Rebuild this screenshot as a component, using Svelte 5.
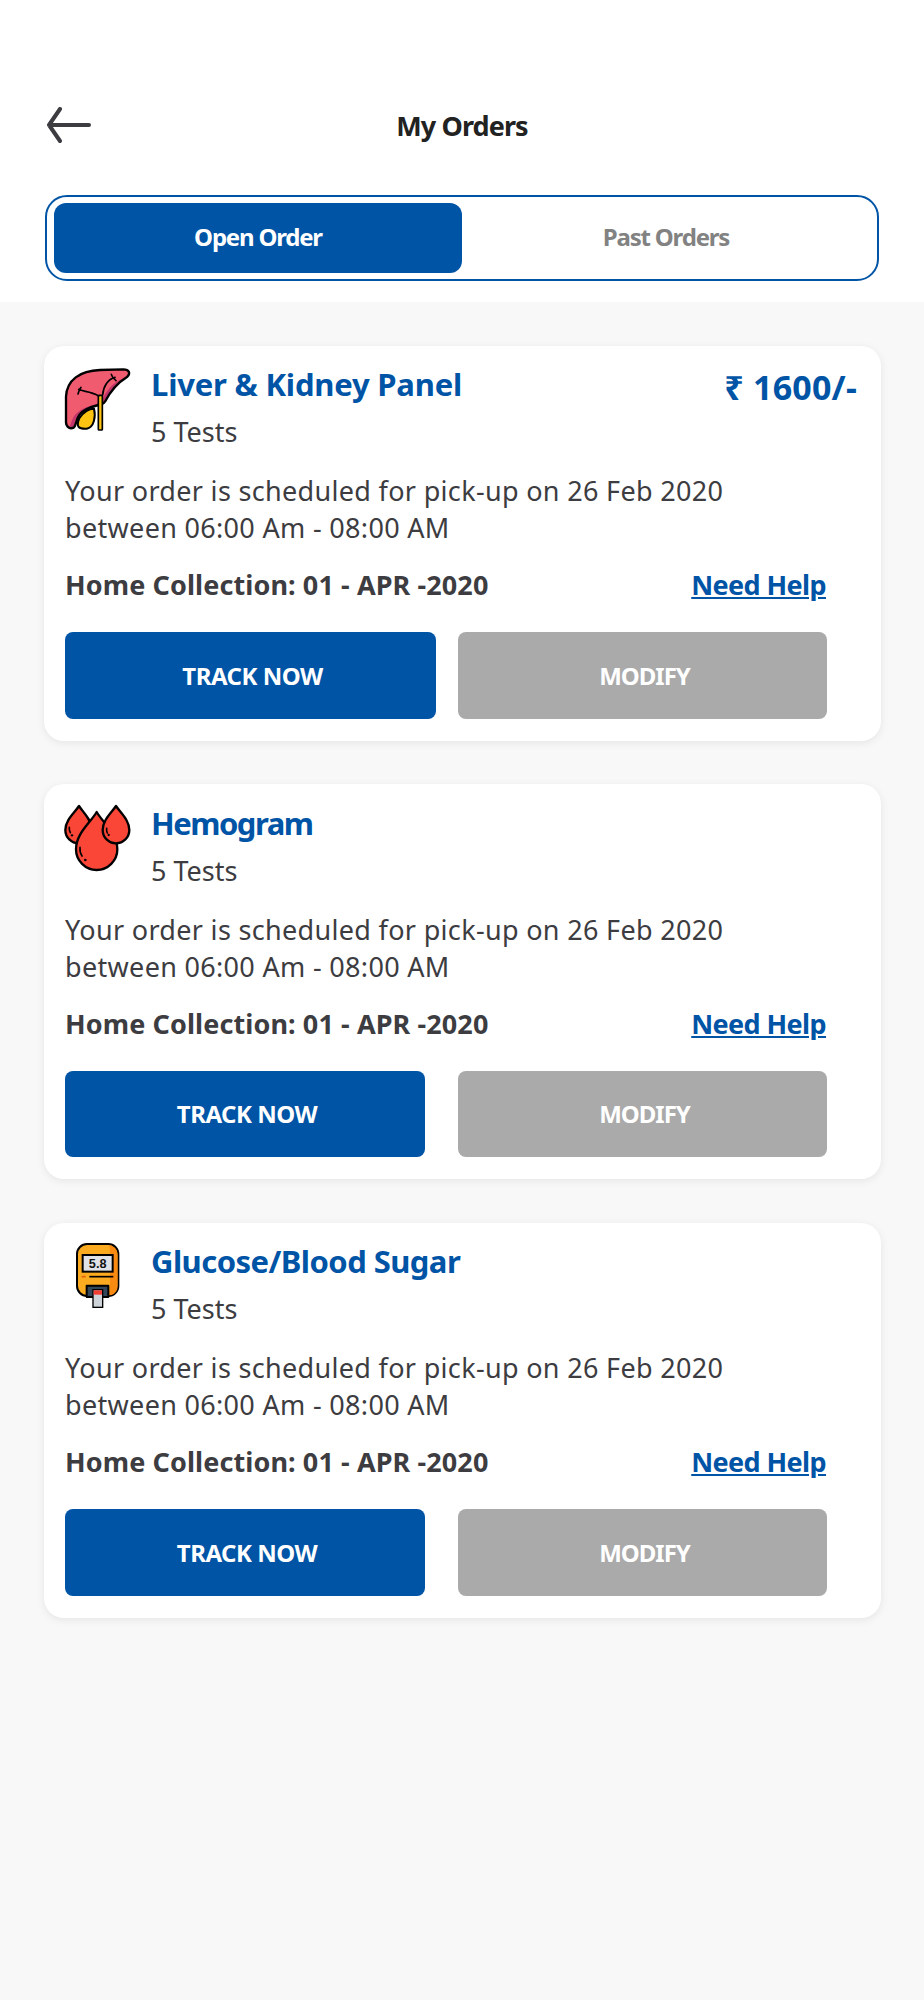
<script>
  const orders = [
    { id: 'liver', name: 'Liver & Kidney Panel', price: '₹ 1600/-', wide: true },
    { id: 'drops', name: 'Hemogram', price: '', wide: false },
    { id: 'meter', name: 'Glucose/Blood Sugar', price: '', wide: false }
  ];
</script>

<div class="page">
  <header class="top">
    <div class="bar">
      <svg class="back" viewBox="0 0 46 36" width="46" height="36" aria-hidden="true">
        <path d="M43 18H3M14 2 3 18l11 16" fill="none" stroke="#3c3c41" stroke-width="4" stroke-linecap="round" stroke-linejoin="round"/>
      </svg>
      <h1>My Orders</h1>
    </div>
    <div class="tabs">
      <div class="tab active">Open Order</div>
      <div class="tab">Past Orders</div>
    </div>
  </header>

  <main class="list">
    {#each orders as o}
      <section class="card">
        <div class="head">
          <div class="icon">
            {#if o.id === 'liver'}
              <svg viewBox="60 66 216 216" width="72" height="72" aria-hidden="true">
                <path d="M118 235C130 215 150 205 162 206c6 24 0 56-22 60-22 1-34-4-22-31z" fill="#ffc312" stroke="#000" stroke-width="6"/>
                <path d="M78 170C80 120 120 92 180 90l70-2c18 0 22 12 12 22-24 15-47 35-67 75-6 8-12 10-20 10-20 5-45 12-57 30-10 15-10 33-17 38-10 5-22-1-23-16z" fill="#f15b6f"/>
                <path d="M84 266c8-8 10-26 20-40 14-18 40-28 60-32 14-3 22-10 26-22 14-30 40-52 72-62-24 15-47 35-67 75-6 8-12 10-20 10-20 5-45 12-57 30-10 15-10 33-17 38-6 3-12 4-17 3z" fill="#c2366b"/>
                <path d="M78 170C80 120 120 92 180 90l70-2c18 0 22 12 12 22-24 15-47 35-67 75-6 8-12 10-20 10-20 5-45 12-57 30-10 15-10 33-17 38-10 5-22-1-23-16z" fill="none" stroke="#000" stroke-width="7" stroke-linejoin="round"/>
                <rect x="175" y="166" width="12" height="104" rx="2" fill="#ffc312" stroke="#000" stroke-width="5"/>
                <path d="M116 148c14 8 34 4 60 20M188 165c2-26 16-48 37-53M114 162c2-8 5-14 9-20M214 103c2 8 8 15 14 19" fill="none" stroke="#000" stroke-width="5" stroke-linecap="round"/>
              </svg>
            {:else if o.id === 'drops'}
              <svg viewBox="60 33 216 216" width="72" height="72" aria-hidden="true">
                <g stroke="#000" stroke-width="7" stroke-linejoin="round" fill="#fa4637">
                  <path d="M117 48C104 68 76 90 76 120c0 22 18 40 40 40s40-18 40-40c0-30-26-52-39-72z"/>
                  <path d="M170 66C150 100 108 130 108 178c0 34 28 62 62 62s62-28 62-62c0-48-42-78-62-112z"/>
                  <path d="M228 48C215 68 188 90 188 120c0 22 18 40 40 40s40-18 40-40c0-30-27-52-40-72z"/>
                </g>
                <path d="M88 112c-1 6 1 12 3 16M120 172c-1 10 2 20 6 26M200 115c-1 6 0 10 2 14" fill="none" stroke="#000" stroke-width="5" stroke-linecap="round"/>
                <circle cx="96" cy="136" r="3.500"/><circle cx="136" cy="210" r="4"/><circle cx="206" cy="135" r="3.500"/>
              </svg>
            {:else}
              <svg viewBox="30 30 216 216" width="72" height="72" aria-hidden="true">
                <rect x="81" y="45" width="124" height="156" rx="30" fill="#fbab1f" stroke="#000" stroke-width="6"/>
                <path d="M178 48c16 4 25 15 25 30v92c0 16-9 27-25 29l-8-6c8-4 10-12 10-22V70c0-10-1-16-2-22z" fill="#f98a12"/>
                <rect x="98" y="78" width="90" height="50" fill="#dfe3e8" stroke="#000" stroke-width="6"/>
                <text x="143" y="116" text-anchor="middle" font-family="Liberation Sans" font-size="38" font-weight="700" fill="#111">5.8</text>
                <path d="M118 143h72" stroke="#000" stroke-width="5"/>
                <path d="M95 143h12" stroke="#e4610f" stroke-width="5"/>
                <path d="M110 170h65v34h-65z" fill="#33475b" stroke="#000" stroke-width="6" stroke-linejoin="round"/>
                <rect x="129" y="182" width="29" height="53" fill="#cfd4da" stroke="#000" stroke-width="4"/>
                <rect x="131" y="184" width="25" height="13" fill="#f33c32"/>
              </svg>
            {/if}
          </div>
          <div class="titles">
            <h2 class={o.id}>{o.name}</h2>
            <p class="tests">5 Tests</p>
          </div>
          {#if o.price}<div class="price">{o.price}</div>{/if}
        </div>
        <p class="desc">Your order is scheduled for pick-up on 26 Feb 2020<br />between 06:00 Am - 08:00 AM</p>
        <div class="row">
          <strong>Home Collection: 01 - APR -2020</strong>
          <a href="#help">Need Help</a>
        </div>
        <div class="btns">
          <div class="btn track" class:wide={o.wide}>TRACK NOW</div>
          <div class="btn modify">MODIFY</div>
        </div>
      </section>
    {/each}
  </main>
</div>

<style>
  :global(body) {
    margin: 0;
    background: #f8f8f8;
  }
  .page {
    font-family: "Noto Sans", "Liberation Sans", sans-serif;
    width: 924px;
    height: 2000px;
    background: #f8f8f8;
    overflow: hidden;
  }
  .top {
    background: #fff;
    height: 302px;
    padding: 106px 45px 0;
    box-sizing: border-box;
  }
  .bar {
    position: relative;
    height: 38px;
    display: flex;
    align-items: center;
    justify-content: center;
  }
  .back {
    position: absolute;
    left: 1px;
    top: 1px;
  }
  h1 {
    margin: 0;
    font-size: 27px;
    font-weight: 700;
    color: #222;
    letter-spacing: -0.9px;
  }
  .tabs {
    margin-top: 51px;
    width: 834px;
    height: 86px;
    box-sizing: border-box;
    border: 2px solid #0054a6;
    border-radius: 22px;
    padding: 6px 7px;
    display: flex;
  }
  .tab {
    width: 408px;
    display: flex;
    align-items: center;
    justify-content: center;
    font-size: 24px;
    font-weight: 700;
    letter-spacing: -1.2px;
    padding-bottom: 4px;
    box-sizing: border-box;
    color: #828282;
  }
  .tab + .tab {
    flex: 1;
  }
  .active {
    background: #0054a6;
    color: #fff;
    border-radius: 12px;
  }
  .list {
    padding: 43.5px 43px 0 44px;
    display: flex;
    flex-direction: column;
    gap: 43.5px;
  }
  .card {
    height: 395px;
    box-sizing: border-box;
    background: #fff;
    border-radius: 20px;
    box-shadow: 0 2px 8px rgba(0, 0, 0, 0.08);
    padding: 22.5px 21px;
    color: #3c3c41;
  }
  .head {
    display: flex;
    height: 104px;
  }
  .icon {
    width: 86px;
  }
  .icon svg {
    display: block;
    margin: -6px 0 0 -5px;
  }
  .titles {
    flex: 1;
  }
  h2 {
    margin: -3px 0 0;
    font-size: 31px;
    line-height: 38px;
    font-weight: 700;
    color: #0054a6;
    letter-spacing: -0.2px;
  }
  h2.drops {
    letter-spacing: -1.5px;
  }
  h2.meter {
    letter-spacing: -0.55px;
  }
  .tests {
    margin: 12px 0 0;
    font-size: 27px;
    line-height: 34px;
    letter-spacing: 0;
  }
  .price {
    font-size: 34px;
    line-height: 42px;
    margin-top: -2px;
    font-weight: 700;
    color: #0054a6;
    letter-spacing: 0.2px;
    padding-right: 3px;
  }
  .desc {
    margin: 0;
    font-size: 27px;
    line-height: 37px;
    letter-spacing: 0.32px;
  }
  .row {
    display: flex;
    justify-content: space-between;
    margin-top: 21px;
    width: 761px;
    line-height: 36px;
    font-size: 27px;
  }
  strong {
    font-weight: 700;
    letter-spacing: 0.1px;
  }
  a {
    color: #0054a6;
    font-weight: 700;
    letter-spacing: -0.6px;
  }
  .btns {
    display: flex;
    justify-content: space-between;
    width: 762px;
    margin-top: 29px;
  }
  .btn {
    height: 86.5px;
    border-radius: 8px;
    display: flex;
    align-items: center;
    justify-content: center;
    color: #fff;
    font-size: 24px;
    font-weight: 700;
    box-sizing: border-box;
    padding-left: 4px;
  }
  .track {
    width: 360px;
    background: #0054a6;
    letter-spacing: -0.5px;
  }
  .track.wide {
    width: 371px;
  }
  .modify {
    width: 369px;
    background: #aaa;
    letter-spacing: -1px;
  }
</style>
